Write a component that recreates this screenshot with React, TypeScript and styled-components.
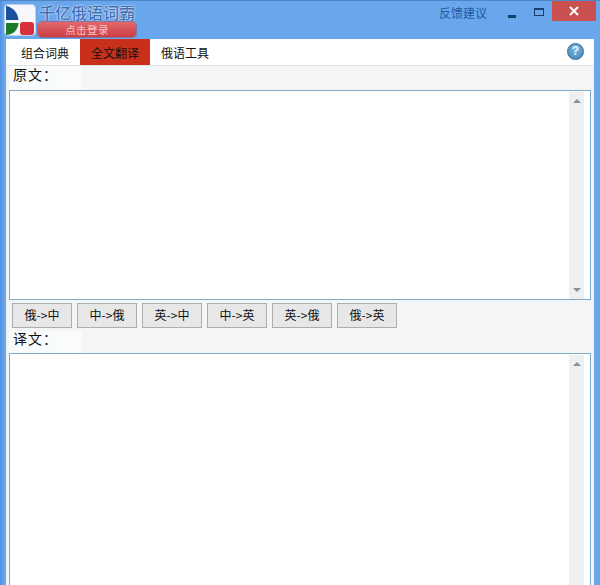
import React from "react";
import styled, { createGlobalStyle } from "styled-components";

const GlobalStyle = createGlobalStyle`
  html, body {
    margin: 0;
    padding: 0;
    height: 100%;
    overflow: hidden;
  }
  #root {
    height: 100%;
  }
`;

const cjk = `"Noto Sans CJK SC", "Liberation Sans", sans-serif`;

const tabs = ["组合词典", "全文翻译", "俄语工具"];
const directions = ["俄->中", "中->俄", "英->中", "中->英", "英->俄", "俄->英"];

const Logo = () => (
  <svg width="32" height="32" viewBox="0 0 32 32">
    <rect x="0.5" y="0.5" width="31" height="31" rx="4" fill="#f6f8fb" stroke="#b9d3ef" />
    <path d="M2 2 L2 16 L14.5 16 C14 9 9 3 2 2 Z" fill="#1c4f9e" />
    <path d="M2 19 L14.5 19 C14 26 9 31 2 31 Z" fill="#1a7a28" />
    <rect x="16" y="18" width="14" height="13" rx="3" fill="#d8303c" />
  </svg>
);

const App = () => {
  return (
    <Window>
      <GlobalStyle />
      <TitleBar>
        <LogoSlot>
          <Logo />
        </LogoSlot>
        <Brand>
          <BrandName>千亿俄语词霸</BrandName>
          <LoginButton>点击登录</LoginButton>
        </Brand>
        <Feedback>反馈建议</Feedback>
        <WinButton>
          <svg width="10" height="14" viewBox="0 0 10 14">
            <rect x="1" y="11" width="8" height="3" fill="#173f6f" />
          </svg>
        </WinButton>
        <WinButton>
          <svg width="12" height="10" viewBox="0 0 12 10">
            <rect x="1.5" y="2.5" width="9" height="7" fill="none" stroke="#173f6f" strokeWidth="1" />
            <rect x="1" y="2" width="10" height="2" fill="#173f6f" />
          </svg>
        </WinButton>
        <CloseButton>
          <svg width="10" height="10" viewBox="0 0 10 10">
            <path d="M1 1 L9 9 M9 1 L1 9" stroke="#fff" strokeWidth="2" />
          </svg>
        </CloseButton>
      </TitleBar>
      <Content>
        <TabBar>
          {tabs.map((t, i) => (
            <Tab key={t} $active={i === 1}>
              {t}
            </Tab>
          ))}
          <HelpIcon>?</HelpIcon>
        </TabBar>
        <Body>
          <FieldLabel $height={24}>原文：</FieldLabel>
          <TextBox $height={210}>
            <ScrollTrack>
              <Arrow />
              <Arrow $down />
            </ScrollTrack>
          </TextBox>
          <ButtonRow>
            {directions.map((d) => (
              <DirectionButton key={d}>{d}</DirectionButton>
            ))}
          </ButtonRow>
          <FieldLabel $height={22}>译文：</FieldLabel>
          <TextBox $height={260}>
            <ScrollTrack>
              <Arrow />
            </ScrollTrack>
          </TextBox>
        </Body>
      </Content>
    </Window>
  );
};

export default App;

const Window = styled.div`
  width: 600px;
  height: 585px;
  overflow: hidden;
  background: linear-gradient(90deg, #4f8fe0 0, #6aa6ec 4px, #6aa6ec 100%);
  border-top: 1px solid #4f86c6;
  box-sizing: border-box;
  display: flex;
  flex-direction: column;
  font-family: ${cjk};
`;

const TitleBar = styled.div`
  height: 38px;
  flex: none;
  display: flex;
  align-items: flex-start;
  padding: 0 4px;
  box-sizing: border-box;
`;

const LogoSlot = styled.div`
  width: 32px;
  height: 32px;
  margin-top: 3px;
  flex: none;
`;

const Brand = styled.div`
  margin-left: 2px;
  width: 98px;
  display: flex;
  flex-direction: column;
  align-items: center;
`;

const BrandName = styled.div`
  height: 20px;
  margin-top: 1px;
  line-height: 20px;
  font-size: 16px;
  font-weight: 500;
  color: #3f70b4;
  white-space: nowrap;
  text-shadow: 0 0 1px #f2f7ff, 0 0 2px #e6f0fd;
`;

const LoginButton = styled.div`
  width: 98px;
  height: 15px;
  line-height: 15px;
  border-radius: 4px;
  background: linear-gradient(#e2686c, #cb3f45);
  color: #f6c9c4;
  font-size: 10.5px;
  letter-spacing: 0.4px;
  text-align: center;
  box-shadow: 0 0 0 1px rgba(160, 60, 80, 0.5);
`;

const Feedback = styled.div`
  margin-left: auto;
  margin-top: 3px;
  margin-right: 11px;
  font-size: 12px;
  line-height: 17px;
  color: #1f5a9e;
`;

const WinButton = styled.div`
  width: 27px;
  height: 19px;
  display: flex;
  align-items: center;
  justify-content: center;
`;

const CloseButton = styled.div`
  width: 44px;
  height: 20px;
  background: #c9504e;
  display: flex;
  align-items: center;
  justify-content: center;
`;

const Content = styled.div`
  flex: 1;
  margin: 0 6px;
  background: #f3f5f7;
  display: flex;
  flex-direction: column;
  min-height: 0;
`;

const TabBar = styled.div`
  height: 27px;
  flex: none;
  box-sizing: border-box;
  background: #fff;
  border-bottom: 1px solid #dfe3e6;
  display: flex;
  align-items: stretch;
  padding-left: 4px;
  position: relative;
`;

const Tab = styled.div<{ $active?: boolean }>`
  width: 70px;
  text-align: center;
  font-size: 12px;
  line-height: 27px;
  color: #111;
  background: ${(p) => (p.$active ? "#c9301c" : "transparent")};
`;

const HelpIcon = styled.div`
  position: absolute;
  right: 10px;
  top: 4px;
  width: 15px;
  height: 15px;
  border-radius: 50%;
  border: 1px solid #2f6f9c;
  background: radial-gradient(circle at 50% 35%, #7fb6dc, #3f80b4);
  color: #e8f4fb;
  font: bold 12px/15px "Liberation Sans", sans-serif;
  text-align: center;
`;

const Body = styled.div`
  flex: 1;
  min-height: 0;
  padding: 0 3px;
  display: flex;
  flex-direction: column;
`;

const FieldLabel = styled.div<{ $height: number }>`
  width: 73px;
  height: ${(p) => p.$height}px;
  line-height: ${(p) => p.$height - 8}px;
  flex: none;
  box-sizing: border-box;
  padding-left: 4px;
  font-size: 14px;
  letter-spacing: 1px;
  color: #111;
  background: #fafbfc;
`;

const TextBox = styled.div<{ $height: number }>`
  height: ${(p) => p.$height}px;
  flex: none;
  box-sizing: border-box;
  border: 1px solid #7fa9c6;
  background: #fff;
  display: flex;
  justify-content: flex-end;
  padding: 1px 6px 0 0;
`;

const ScrollTrack = styled.div`
  width: 15px;
  height: 100%;
  background: #eeeff0;
  display: flex;
  flex-direction: column;
  align-items: center;
  justify-content: space-between;
  padding: 7px 0;
  box-sizing: border-box;
`;

const Arrow = styled.div<{ $down?: boolean }>`
  width: 0;
  height: 0;
  border-left: 4px solid transparent;
  border-right: 4px solid transparent;
  ${(p) =>
    p.$down ? "border-top: 4px solid #8a8f94;" : "border-bottom: 4px solid #8a8f94;"}
`;

const ButtonRow = styled.div`
  height: 31px;
  flex: none;
  box-sizing: border-box;
  padding: 3px 0 0 3px;
  display: flex;
  gap: 5px;
`;

const DirectionButton = styled.div`
  width: 60px;
  height: 25px;
  box-sizing: border-box;
  border: 1px solid #adadad;
  background: #e7e7e7;
  font-size: 12px;
  line-height: 21px;
  text-align: center;
  color: #111;
`;
